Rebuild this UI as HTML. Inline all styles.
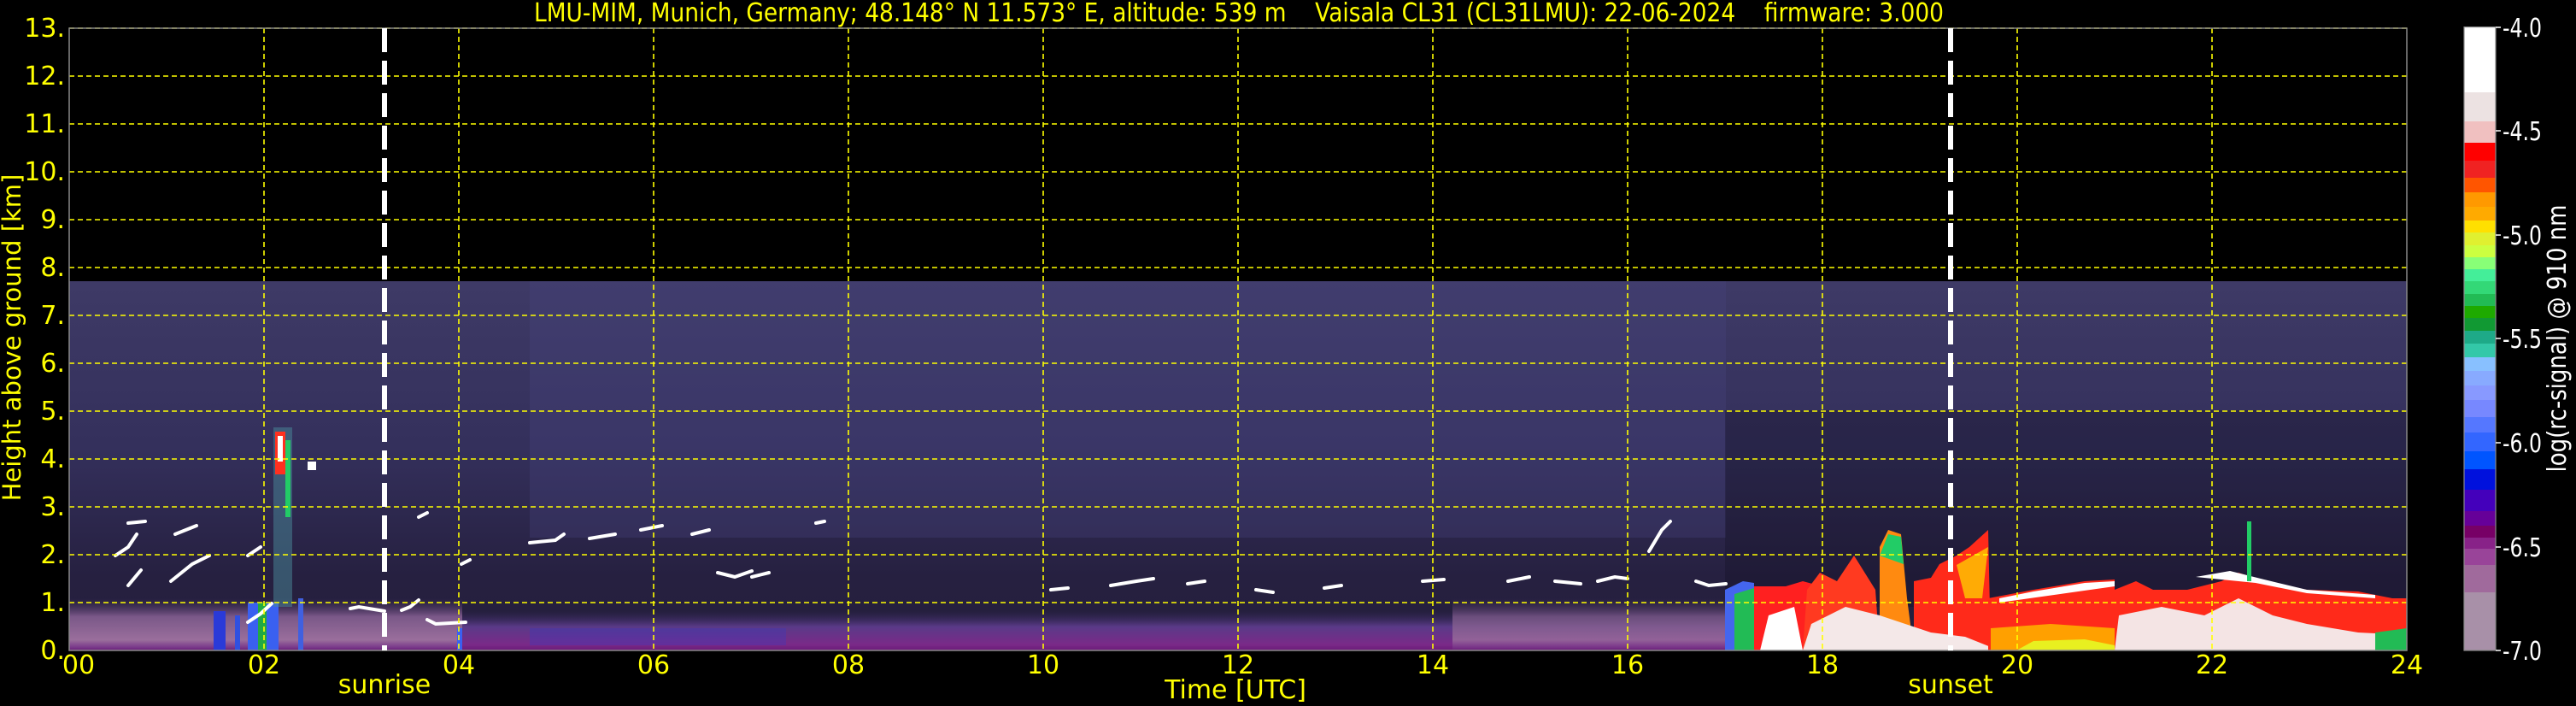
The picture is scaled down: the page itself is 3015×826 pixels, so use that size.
<!DOCTYPE html>
<html><head><meta charset="utf-8"><style>html,body{margin:0;padding:0;background:#000;}svg{display:block}</style></head><body>
<svg width="3015" height="826" viewBox="0 0 3015 826" xmlns="http://www.w3.org/2000/svg" font-family="DejaVu Sans, Liberation Sans, sans-serif">
<defs>
<linearGradient id="sky" x1="0" y1="0" x2="0" y2="1">
<stop offset="0" stop-color="#3e3a66"/><stop offset="0.45" stop-color="#34305c"/><stop offset="0.8" stop-color="#262040"/><stop offset="1" stop-color="#241e3c"/>
</linearGradient>
<linearGradient id="bl" x1="0" y1="0" x2="0" y2="1">
<stop offset="0" stop-color="#4a3360" stop-opacity="0"/><stop offset="0.35" stop-color="#7a5888"/><stop offset="0.8" stop-color="#9a6e9c"/><stop offset="0.93" stop-color="#7c3c8c"/><stop offset="1" stop-color="#6a1e7a"/>
</linearGradient>
<linearGradient id="bl2" x1="0" y1="0" x2="0" y2="1">
<stop offset="0" stop-color="#3a2a60" stop-opacity="0"/><stop offset="0.4" stop-color="#5a3a88"/><stop offset="0.85" stop-color="#7a2a88"/><stop offset="1" stop-color="#6a1a78"/>
</linearGradient>
</defs>

<rect x="81" y="329" width="2736" height="432" fill="url(#sky)"/>
<rect x="620" y="329" width="1400" height="300" fill="#4a4680" opacity="0.3"/>
<rect x="2019" y="480" width="798" height="230" fill="#141024" opacity="0.35"/>
<rect x="81" y="700" width="460" height="61" fill="url(#bl)"/>
<rect x="541" y="715" width="1478" height="46" fill="url(#bl2)"/>
<rect x="1700" y="700" width="319" height="61" fill="url(#bl)" opacity="0.8"/>
<rect x="250" y="715" width="14" height="46" fill="#2a3ad8"/>
<rect x="275" y="720" width="6" height="41" fill="#3050e0"/>
<rect x="290" y="705" width="36" height="56" fill="#3a60f0"/>
<rect x="302" y="705" width="10" height="56" fill="#22aa44"/>
<rect x="349" y="700" width="6" height="61" fill="#4060e0"/>
<rect x="535" y="735" width="6" height="26" fill="#3a60f0"/>
<rect x="620" y="735" width="300" height="20" fill="#3a3ac0" opacity="0.35"/>
<rect x="320" y="500" width="22" height="210" fill="#4a8a9a" opacity="0.5"/>
<rect x="322" y="505" width="12" height="50" fill="#ff3020"/>
<rect x="325" y="510" width="6" height="30" fill="#ffffff"/>
<rect x="334" y="515" width="6" height="90" fill="#22cc66"/>
<rect x="360" y="540" width="10" height="10" fill="#ffffff"/>
<g stroke="#fff" stroke-width="4" fill="none" stroke-linecap="round">
<polyline points="135,650 150,640 160,625"/>
<polyline points="150,685 165,667"/>
<polyline points="200,680 225,660 245,650"/>
<polyline points="205,625 230,615"/>
<polyline points="290,728 305,718 318,706"/>
<polyline points="150,612 170,610"/>
<polyline points="290,650 305,640"/>
<polyline points="500,725 510,730 545,728"/>
<polyline points="410,712 420,710 450,715"/>
<polyline points="470,714 480,710 490,702"/>
<polyline points="490,605 500,600"/>
<polyline points="540,660 550,655"/>
<polyline points="620,635 650,632 660,625"/>
<polyline points="690,630 720,625"/>
<polyline points="750,620 775,615"/>
<polyline points="810,625 830,620"/>
<polyline points="840,670 860,675 880,668"/>
<polyline points="880,675 900,670"/>
<polyline points="955,612 965,610"/>
<polyline points="1230,690 1250,688"/>
<polyline points="1300,685 1330,680 1350,677"/>
<polyline points="1390,683 1410,680"/>
<polyline points="1470,690 1490,693"/>
<polyline points="1550,688 1570,685"/>
<polyline points="1665,680 1690,678"/>
<polyline points="1765,680 1790,675"/>
<polyline points="1820,680 1850,683"/>
<polyline points="1870,680 1890,675 1905,677"/>
<polyline points="1930,645 1945,620 1955,610"/>
<polyline points="1985,680 2000,685 2020,683"/>
</g>
<polygon points="2019,761 2019,690 2040,680 2053,682 2053,761" fill="#4466ee"/>
<polygon points="2030,761 2030,695 2053,688 2060,761" fill="#22bb55"/>
<polygon points="2053,761 2053,686 2090,686 2110,680 2125,684 2110,761" fill="#ff2020"/>
<polygon points="2060,761 2070,720 2100,710 2110,761" fill="#ffffff"/>
<polygon points="2110,761 2115,690 2130,670 2150,680 2170,650 2195,690 2200,761" fill="#ff3a20"/>
<polygon points="2200,761 2200,640 2210,620 2225,625 2232,700 2240,761" fill="#ff8a10"/>
<polygon points="2200,650 2210,625 2225,628 2228,660" fill="#22cc66"/>
<polygon points="2240,761 2240,680 2260,676 2270,660 2290,650 2305,640 2327,620 2330,761" fill="#ff2a1a"/>
<polygon points="2290,661 2327,640 2320,700 2300,700" fill="#ffcc00" opacity="0.8"/>
<polygon points="2110,761 2120,730 2160,710 2200,720 2260,740 2300,745 2340,761" fill="#f4e8e8"/>
<polygon points="2327,761 2327,700 2380,690 2440,680 2475,678 2475,761" fill="#ff2a1a"/>
<polygon points="2340,700 2380,692 2440,682 2475,680 2475,686 2340,705" fill="#ffffff"/>
<polygon points="2330,761 2330,735 2400,730 2475,735 2475,761" fill="#ffa000"/>
<polygon points="2360,761 2380,750 2440,748 2475,755 2475,761" fill="#e8f020"/>
<polygon points="2475,761 2475,690 2500,680 2520,690 2560,690 2600,680 2620,670 2650,680 2700,690 2760,692 2800,700 2817,700 2817,761" fill="#ff2a1a"/>
<polygon points="2475,761 2480,720 2530,710 2580,720 2620,700 2660,720 2700,730 2760,740 2800,742 2817,761" fill="#f4e4e4"/>
<polygon points="2570,675 2610,668 2650,678 2700,690 2780,696 2780,700 2700,694 2640,682" fill="#ffffff"/>
<rect x="2630" y="610" width="5" height="70" fill="#22cc66"/>
<polygon points="2780,761 2780,740 2817,735 2817,761" fill="#22bb55"/>
<g stroke="#ffff00" stroke-width="1.6" stroke-dasharray="6,4" fill="none">
<path d="M81,33H2817M81,89H2817M81,145H2817M81,201H2817M81,257H2817M81,313H2817M81,369H2817M81,425H2817M81,481H2817M81,537H2817M81,593H2817M81,649H2817M81,705H2817"/>
<path d="M309,33V761M537,33V761M765,33V761M993,33V761M1221,33V761M1449,33V761M1677,33V761M1905,33V761M2133,33V761M2361,33V761M2589,33V761"/>
</g>
<rect x="81" y="33" width="2736" height="728" fill="none" stroke="#888" stroke-width="1.5"/>
<g stroke="#fff" stroke-width="6" stroke-dasharray="28,10">
<line x1="450" y1="33" x2="450" y2="761"/>
<line x1="2283" y1="33" x2="2283" y2="761"/>
</g>
<text x="625" y="25" font-size="30" fill="#ffff00" textLength="1650" lengthAdjust="spacingAndGlyphs" xml:space="preserve">LMU-MIM, Munich, Germany; 48.148° N 11.573° E, altitude: 539 m    Vaisala CL31 (CL31LMU): 22-06-2024    firmware: 3.000</text>
<g font-size="30" fill="#ffff00" text-anchor="end">
<text x="76" y="43">13.</text><text x="76" y="99">12.</text><text x="76" y="155">11.</text><text x="76" y="211">10.</text><text x="76" y="267">9.</text><text x="76" y="323">8.</text><text x="76" y="379">7.</text><text x="76" y="435">6.</text><text x="76" y="491">5.</text><text x="76" y="547">4.</text><text x="76" y="603">3.</text><text x="76" y="659">2.</text><text x="76" y="715">1.</text><text x="76" y="771">0.</text>
</g>
<text transform="translate(24,395) rotate(-90)" font-size="29" fill="#ffff00" text-anchor="middle">Height above ground [km]</text>
<g font-size="30" fill="#ffff00" text-anchor="middle">
<text x="92" y="788">00</text><text x="309" y="788">02</text><text x="537" y="788">04</text><text x="765" y="788">06</text><text x="993" y="788">08</text><text x="1221" y="788">10</text><text x="1449" y="788">12</text><text x="1677" y="788">14</text><text x="1905" y="788">16</text><text x="2133" y="788">18</text><text x="2361" y="788">20</text><text x="2589" y="788">22</text><text x="2817" y="788">24</text>
<text x="1446" y="817">Time [UTC]</text>
<text x="450" y="811">sunrise</text>
<text x="2283" y="811">sunset</text>
</g>
<g>
<rect x="2884" y="31.6" width="37" height="76.4" fill="#ffffff"/>
<rect x="2884" y="108" width="37" height="34" fill="#ece2e2"/>
<rect x="2884" y="142" width="37" height="25" fill="#f0c0c0"/>
<rect x="2884" y="167" width="37" height="21" fill="#ff0000"/>
<rect x="2884" y="188" width="37" height="20" fill="#f02222"/>
<rect x="2884" y="208" width="37" height="17" fill="#ff5500"/>
<rect x="2884" y="225" width="37" height="17" fill="#ff9900"/>
<rect x="2884" y="242" width="37" height="16" fill="#ffaa00"/>
<rect x="2884" y="258" width="37" height="14" fill="#ffe000"/>
<rect x="2884" y="272" width="37" height="15" fill="#e0f030"/>
<rect x="2884" y="287" width="37" height="14" fill="#ccff40"/>
<rect x="2884" y="301" width="37" height="14" fill="#88ff77"/>
<rect x="2884" y="315" width="37" height="14" fill="#44ee99"/>
<rect x="2884" y="329" width="37" height="15" fill="#33d877"/>
<rect x="2884" y="344" width="37" height="14" fill="#22bb55"/>
<rect x="2884" y="358" width="37" height="14" fill="#1eaa00"/>
<rect x="2884" y="372" width="37" height="15" fill="#119933"/>
<rect x="2884" y="387" width="37" height="15" fill="#1eaa88"/>
<rect x="2884" y="402" width="37" height="16" fill="#33c8a8"/>
<rect x="2884" y="418" width="37" height="16" fill="#88c0ff"/>
<rect x="2884" y="434" width="37" height="17" fill="#88aaff"/>
<rect x="2884" y="451" width="37" height="17" fill="#8899ff"/>
<rect x="2884" y="468" width="37" height="20" fill="#7788ff"/>
<rect x="2884" y="488" width="37" height="18" fill="#5577ff"/>
<rect x="2884" y="506" width="37" height="22" fill="#3366ff"/>
<rect x="2884" y="528" width="37" height="21" fill="#0055ff"/>
<rect x="2884" y="549" width="37" height="24" fill="#0011dd"/>
<rect x="2884" y="573" width="37" height="25" fill="#4400bb"/>
<rect x="2884" y="598" width="37" height="17" fill="#660099"/>
<rect x="2884" y="615" width="37" height="14" fill="#770066"/>
<rect x="2884" y="629" width="37" height="13" fill="#882288"/>
<rect x="2884" y="642" width="37" height="19" fill="#994499"/>
<rect x="2884" y="661" width="37" height="32" fill="#a06a9c"/>
<rect x="2884" y="693" width="37" height="68" fill="#a890a8"/>
<rect x="2884" y="31.6" width="37" height="729.4" fill="none" stroke="#888" stroke-width="1.2"/>
</g>
<g stroke="#fff" stroke-width="1.5"><path d="M2921,32h6M2921,153h6M2921,275h6M2921,396h6M2921,518h6M2921,640h6M2921,761h6"/></g>
<g font-size="30" fill="#ffffff">
<text x="2929" y="43" textLength="46" lengthAdjust="spacingAndGlyphs">-4.0</text>
<text x="2929" y="164" textLength="46" lengthAdjust="spacingAndGlyphs">-4.5</text>
<text x="2929" y="286" textLength="46" lengthAdjust="spacingAndGlyphs">-5.0</text>
<text x="2929" y="407" textLength="46" lengthAdjust="spacingAndGlyphs">-5.5</text>
<text x="2929" y="529" textLength="46" lengthAdjust="spacingAndGlyphs">-6.0</text>
<text x="2929" y="651" textLength="46" lengthAdjust="spacingAndGlyphs">-6.5</text>
<text x="2929" y="772" textLength="46" lengthAdjust="spacingAndGlyphs">-7.0</text>
</g>
<text transform="translate(3003,396) rotate(-90)" font-size="30" fill="#ffffff" text-anchor="middle" textLength="313" lengthAdjust="spacingAndGlyphs">log(rc-signal) @ 910 nm</text>
</svg>
</body></html>
